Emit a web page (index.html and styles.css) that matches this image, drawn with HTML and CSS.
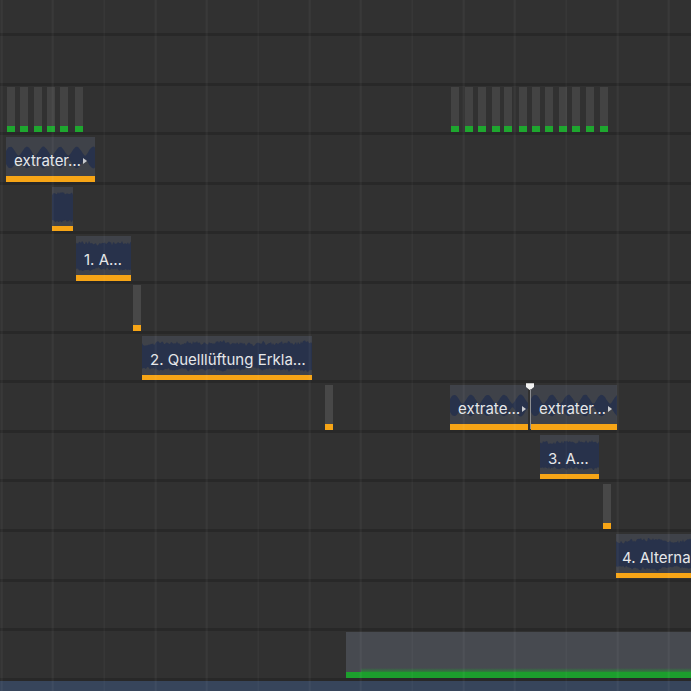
FILE: index.html
```html
<html>
  <head>
    <title>Timeline</title>
    <meta charset="utf-8" />
    <link rel="stylesheet" href="styles.css">
  </head>
  <body>
    <div class="timeline">
      <div class="track track-top"></div>
      <div class="track"></div>

      <!-- pegelanzeigen -->
      <div class="track">
        <div class="meter" style="left:7px"></div>
        <div class="meter" style="left:20px"></div>
        <div class="meter" style="left:34px"></div>
        <div class="meter" style="left:47px"></div>
        <div class="meter" style="left:60px"></div>
        <div class="meter" style="left:75px"></div>

        <div class="meter" style="left:451px"></div>
        <div class="meter" style="left:465px"></div>
        <div class="meter" style="left:478px"></div>
        <div class="meter" style="left:492px"></div>
        <div class="meter" style="left:504px"></div>
        <div class="meter" style="left:519px"></div>
        <div class="meter" style="left:532px"></div>
        <div class="meter" style="left:545px"></div>
        <div class="meter" style="left:559px"></div>
        <div class="meter" style="left:572px"></div>
        <div class="meter" style="left:586px"></div>
        <div class="meter" style="left:600px"></div>
      </div>

      <div class="track">
        <div class="clip" style="left:6px;width:89px">
          <div class="clip-body">
            <div class="wave" data-kind="blob"></div>
            <span class="label">extrater…</span><span class="more"></span>
          </div>
          <div class="clip-bar"></div>
        </div>
      </div>

      <div class="track">
        <div class="clip" style="left:52px;width:21px">
          <div class="clip-body"><div class="wave" data-kind="speech"></div></div>
          <div class="clip-bar"></div>
        </div>
      </div>

      <div class="track">
        <div class="clip" style="left:76px;width:55px">
          <div class="clip-body">
            <div class="wave" data-kind="speech"></div>
            <span class="label">1. A…</span>
          </div>
          <div class="clip-bar"></div>
        </div>
      </div>

      <div class="track">
        <div class="tick" style="left:133px"></div>
      </div>

      <div class="track">
        <div class="clip" style="left:142px;width:170px">
          <div class="clip-body">
            <div class="wave" data-kind="speech"></div>
            <span class="label">2. Quelllüftung Erkla…</span>
          </div>
          <div class="clip-bar"></div>
        </div>
      </div>

      <div class="track">
        <div class="tick" style="left:325px"></div>
        <div class="clip" style="left:450px;width:78px">
          <div class="clip-body">
            <div class="wave" data-kind="blob"></div>
            <span class="label">extrate…</span><span class="more"></span>
          </div>
          <div class="clip-bar"></div>
        </div>
        <div class="clip" style="left:531px;width:86px">
          <div class="clip-body">
            <div class="wave" data-kind="blob"></div>
            <span class="label">extrater…</span><span class="more"></span>
          </div>
          <div class="clip-bar"></div>
        </div>
        <div class="playhead" style="left:526px"></div>
      </div>

      <div class="track">
        <div class="clip" style="left:540px;width:59px">
          <div class="clip-body">
            <div class="wave" data-kind="speech"></div>
            <span class="label">3. A…</span>
          </div>
          <div class="clip-bar"></div>
        </div>
      </div>

      <div class="track">
        <div class="tick" style="left:603px"></div>
      </div>

      <div class="track">
        <div class="clip clip-cut" style="left:616px;width:75px">
          <div class="clip-body">
            <div class="wave" data-kind="speech"></div>
            <span class="label">4. Alterna</span>
          </div>
          <div class="clip-bar"></div>
        </div>
      </div>

      <div class="track"></div>

      <!-- summenspur -->
      <div class="track">
        <div class="master" style="left:346px"></div>
      </div>

      <div class="ruler"></div>
    </div>
    <script src="script.js"></script>
  </body>
</html>
```

FILE: styles.css
```css
html, body {
  width: 100%;
  height: 100%;
  margin: 0px;
  overflow: hidden;
  background-color: #313131;
  font-family: Inter, "Noto Sans", sans-serif;
}

.timeline {
  position: relative;
  width: 100%;
  height: 100%;
  overflow: hidden;
}

/* senkrechte Rasterlinien über allem */
.timeline::after {
  content: "";
  position: absolute;
  left: 0px;
  top: 0px;
  right: 0px;
  bottom: 0px;
  pointer-events: none;
  background-image: repeating-linear-gradient(90deg, rgba(255, 255, 255, 0.04) 0px, rgba(255, 255, 255, 0.04) 1.6px, transparent 1.6px, transparent 51.33px);
  background-position: 0.7px 0px;
}

.track {
  position: relative;
  height: 46.6px;
  border-bottom: 3px solid #282828;
}

.track-top {
  height: 33px;
}

.meter {
  position: absolute;
  top: 1.5px;
  bottom: 0px;
  width: 8px;
  background-color: #434343;
}

.meter::after {
  content: "";
  position: absolute;
  left: 0px;
  right: 0px;
  bottom: 0px;
  height: 6px;
  background-color: #1ea72f;
}

.tick {
  position: absolute;
  top: 1.5px;
  bottom: 0px;
  width: 8px;
  background-color: #484848;
}

.tick::after {
  content: "";
  position: absolute;
  left: 0px;
  right: 0px;
  bottom: 0px;
  height: 6px;
  background-color: #f7a516;
}

.clip {
  position: absolute;
  top: 2px;
  height: 44.5px;
  display: flex;
  flex-direction: column;
}

.clip-body {
  position: relative;
  flex: 1;
  display: flex;
  align-items: center;
  padding: 8px 4px 0px 8px;
  background-color: #3f4249;
  overflow: hidden;
}

.clip-cut .clip-body {
  padding-left: 6px;
  padding-right: 0px;
}

.clip-bar {
  height: 5.5px;
  background-color: #f7a516;
}

.wave {
  position: absolute;
  left: 0px;
  top: 0px;
  right: 0px;
  bottom: 0px;
}

.wave svg {
  display: block;
  fill: #28324b;
}

.label {
  position: relative;
  color: #e6e7e9;
  font-size: 15px;
  white-space: nowrap;
}

.more {
  position: relative;
  margin-left: 2px;
  border-left: 4px solid #c9cbcf;
  border-top: 3px solid transparent;
  border-bottom: 3px solid transparent;
}

.playhead {
  position: absolute;
  top: 0px;
  bottom: 0px;
  width: 8px;
}

.playhead::before {
  content: "";
  position: absolute;
  left: 0px;
  top: 0px;
  width: 8px;
  height: 7px;
  background-color: #f2f2f2;
  clip-path: polygon(0 0, 100% 0, 100% 55%, 50% 100%, 0 55%);
}

.playhead::after {
  content: "";
  position: absolute;
  left: 3.5px;
  top: 6px;
  bottom: 1px;
  width: 1px;
  background-color: #8d8f93;
}

.master {
  position: absolute;
  top: 0.8px;
  right: 0px;
  bottom: 0px;
  background-color: #474a50;
}

.master::before {
  content: "";
  position: absolute;
  left: 15px;
  right: 0px;
  bottom: 5px;
  height: 5px;
  background-image: linear-gradient(to top, rgba(31, 160, 46, 0.8), rgba(31, 160, 46, 0));
}

.master::after {
  content: "";
  position: absolute;
  left: 0px;
  right: 0px;
  bottom: 0px;
  height: 6px;
  background-color: #1c9f2d;
}

.ruler {
  height: 12px;
  background-color: #37455b;
}
```

FILE: script.js
```js
// einfache Zufallszahlen, damit die Wellenform immer gleich aussieht
function makeRandom(seed) {
  return function () {
    seed = (seed * 16807) % 2147483647;
    return (seed - 1) / 2147483646;
  };
}

function drawWave(el, index) {
  var w = el.clientWidth;
  var h = el.clientHeight;
  var rand = makeRandom(index * 131 + 17);
  var upper = [];
  var lower = [];
  var c = h / 2 + 1;
  var env = 0.7;

  for (var x = 0; x <= w; x++) {
    if (el.dataset.kind == "blob") {
      // runde Buckel, etwa alle 16px
      var p = ((x + 4) % 16.6) / 16.6;
      var k = Math.sin(p * Math.PI);
      var a = Math.pow(k, 1.6) * 9 + 1.5 + rand() * 0.6;
      upper.push(x + "," + (c - a).toFixed(1));
      lower.unshift(x + "," + (c + a).toFixed(1));
    } else {
      // Sprache: langsam wechselnde Lautstärke plus Rauschen
      env = env * 0.8 + (0.45 + rand() * 0.55) * 0.2;
      var half = (h / 2 - 3) * env;
      var t = c - half - rand() * 3;
      var b = c + half + rand() * 2;
      if (t < 4) t = 4;
      if (b > h - 1) b = h - 1;
      upper.push(x + "," + t.toFixed(1));
      lower.unshift(x + "," + b.toFixed(1));
    }
  }

  el.innerHTML = '<svg width="' + w + '" height="' + h + '"><polygon points="' + upper.concat(lower).join(" ") + '"/></svg>';
}

var waves = document.querySelectorAll(".wave");
for (var i = 0; i < waves.length; i++) {
  drawWave(waves[i], i);
}
```
